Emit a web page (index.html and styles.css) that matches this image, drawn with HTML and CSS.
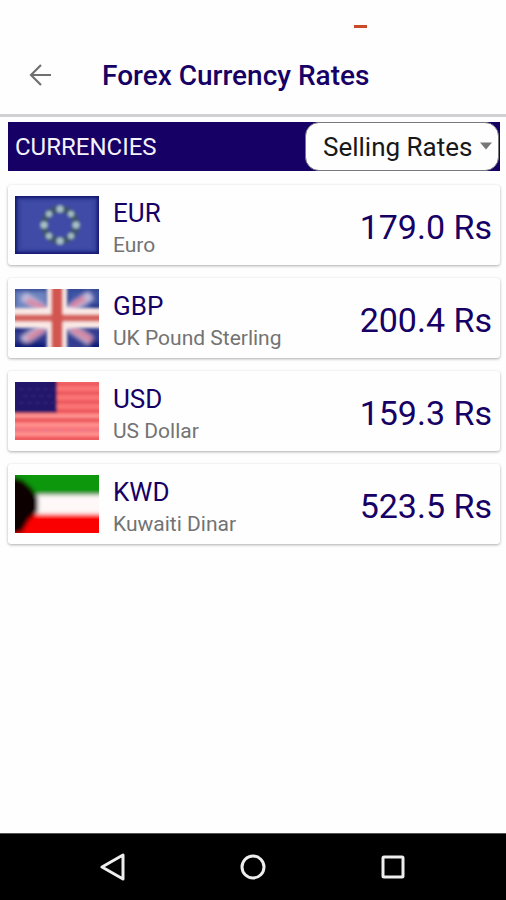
FILE: index.html
```html
<!DOCTYPE html>
<html lang="en">
<head>
<meta charset="utf-8">
<meta name="viewport" content="width=device-width, initial-scale=1">
<title>Forex Currency Rates</title>
<link rel="stylesheet" href="styles.css">
</head>
<body>
<div class="screen">
  <div class="status"><span class="status-mark"></span></div>
  <header class="app-bar">
    <button class="back" type="button" aria-label="Back">
      <svg width="24" height="24" viewBox="0 0 24 24" fill="none" stroke="#707070" stroke-width="2.200"><path d="M23 12H3M13 2L3 12l10 10"/></svg>
    </button>
    <h1 class="title">Forex Currency Rates</h1>
  </header>
  <main class="content">
    <div class="toolbar">
      <h2 class="toolbar-title">CURRENCIES</h2>
      <div class="picker">
        <select class="picker-select" aria-label="Rate type">
          <option>Selling Rates</option>
        </select>
        <svg class="picker-arrow" width="14" height="8" viewBox="0 0 14 8"><path d="M1 0.500h12L7 7.500z" fill="#777"/></svg>
      </div>
    </div>
    <ul class="rates">
      <li class="card">
        <svg class="flag" viewBox="0 0 84 58">
          <defs>
            <filter id="soft" x="-10%" y="-10%" width="120%" height="120%"><feGaussianBlur stdDeviation="1.500"/></filter>
            <filter id="softer" x="-10%" y="-10%" width="120%" height="120%"><feGaussianBlur stdDeviation="2"/></filter>
          </defs>
          <rect width="84" height="58" fill="#11166f"/>
          <g filter="url(#soft)">
            <rect x="2" y="2" width="80" height="54" fill="#3944a0"/>
            <rect x="7" y="6" width="70" height="46" fill="#414ba8"/>
            <circle cx="45" cy="29" r="16" fill="none" stroke="#3c526d" stroke-width="7"/>
            <g fill="#a9c3c9"><circle cx="45" cy="13" r="3.500"/><circle cx="56" cy="18" r="3"/><circle cx="61" cy="29" r="3.500"/><circle cx="56" cy="40" r="3"/><circle cx="45" cy="45" r="3.500"/><circle cx="34" cy="40" r="3"/><circle cx="29" cy="29" r="3.500"/><circle cx="34" cy="18" r="3"/></g>
          </g>
        </svg>
        <div class="names"><span class="code">EUR</span><span class="name">Euro</span></div>
        <span class="rate">179.0 Rs</span>
      </li>
      <li class="card">
        <svg class="flag" viewBox="0 0 84 58">
          <rect width="84" height="58" fill="#344793"/>
          <g filter="url(#softer)">
            <path d="M0 2h32v19H0z" fill="#6d85c0"/><path d="M54 2h30v19H54z" fill="#3d55a6"/>
            <path d="M0 38h32v20H0zM54 38h30v20H54z" fill="#303b91"/>
            <path d="M8 7l68 45M76 6L8 52" stroke="#c3bfe0" stroke-width="9"/>
            <path d="M12 11l18 9M70 9L56 18M12 50l17-11M56 39l20 12" stroke="#dc7f98" stroke-width="5"/>
            <path d="M75 16h12v7H75zM-3 35h9v7h-9zM74 53h14v9H74zM-3 53h34v9H-3z" fill="#101a78"/>
          </g>
          <g filter="url(#soft)">
            <path d="M42-4v66M-4 29h92" stroke="#fae9e6" stroke-width="20"/>
            <path d="M-4 29h92" stroke="#d5625e" stroke-width="7"/>
            <path d="M42-4v66" stroke="#d2554f" stroke-width="11"/>
          </g>
        </svg>
        <div class="names"><span class="code">GBP</span><span class="name">UK Pound Sterling</span></div>
        <span class="rate">200.4 Rs</span>
      </li>
      <li class="card">
        <svg class="flag" viewBox="0 0 84 58">
          <rect width="84" height="58" fill="#f56a6c"/>
          <g filter="url(#soft)">
            <path d="M-4-4h92v66H-4z" fill="#fb7474"/>
            <path d="M-4 2h92M-4 11h92M-4 20h92M-4 29h92M-4 38h92M-4 57h92" stroke="#e84e56" stroke-width="3"/>
            <path d="M-4 34h92M-4 43h92M-4 52h92" stroke="#ff9894" stroke-width="3"/>
            <path d="M0 48h84" stroke="#ef788b" stroke-width="3" stroke-dasharray="9 4"/>
            <path d="M-4-4h46v35H-4z" fill="#20186b"/>
            <path d="M5 7h34M9 14h30M5 21h34" stroke="#342779" stroke-width="2" stroke-dasharray="3 5"/>
          </g>
        </svg>
        <div class="names"><span class="code">USD</span><span class="name">US Dollar</span></div>
        <span class="rate">159.3 Rs</span>
      </li>
      <li class="card">
        <svg class="flag" viewBox="0 0 84 58">
          <path d="M0 0h84v20H0z" fill="#07970b"/><path d="M0 38h84v20H0z" fill="#fb0500"/>
          <g filter="url(#softer)">
            <path d="M-8-8h100v28H-8z" fill="#07970b"/>
            <path d="M-8 20h100v19H-8z" fill="#fff8f8"/>
            <path d="M-8 39h100v28H-8z" fill="#fb0500"/>
            <path d="M-8 0L8 5l9 8 6 10v13l-9 9-7 12-15 3z" fill="#080305"/>
          </g>
        </svg>
        <div class="names"><span class="code">KWD</span><span class="name">Kuwaiti Dinar</span></div>
        <span class="rate">523.5 Rs</span>
      </li>
    </ul>
  </main>
  <nav class="nav-bar" aria-label="System">
    <button class="nav-button" type="button" aria-label="Back"><svg width="28" height="28" viewBox="0 0 28 28"><path d="M3 14L24 2v24z"/></svg></button>
    <button class="nav-button" type="button" aria-label="Home"><svg width="28" height="28" viewBox="0 0 28 28"><circle cx="14" cy="14" r="11"/></svg></button>
    <button class="nav-button" type="button" aria-label="Recent apps"><svg width="28" height="28" viewBox="0 0 28 28"><rect x="4" y="4" width="20" height="20" rx="1"/></svg></button>
  </nav>
</div>
</body>
</html>
```
FILE: styles.css
```css
* {
  box-sizing: border-box;
}

body {
  margin: 0;
  background: #fefefe;
  color: #160066;
  font-family: Roboto, "Liberation Sans", sans-serif;
}

button {
  padding: 0;
  border: 0;
  background: none;
}

.screen {
  display: flex;
  flex-direction: column;
  min-height: 100vh;
}

.status {
  display: flex;
  justify-content: flex-end;
  height: 36px;
  padding: 25px 139px 0 0;
}

.status-mark {
  width: 13px;
  height: 3px;
  background: #cb4a29;
}

.app-bar {
  display: flex;
  align-items: center;
  gap: 50px;
  height: 81px;
  padding: 0 28px;
  border-bottom: 3px solid #d0d0d2;
}

.back {
  display: flex;
}

.title {
  margin: 0;
  padding-top: 2px;
  font-size: 28px;
  font-weight: 500;
  line-height: 32px;
}

.content {
  flex: 1;
  padding: 5px 6px 0 8px;
}

.toolbar {
  display: flex;
  align-items: center;
  justify-content: space-between;
  height: 49px;
  padding: 0 1px 0 7px;
  background: #160066;
}

.toolbar-title {
  margin: 0;
  color: #f4f2fa;
  font-size: 24px;
  font-weight: 400;
}

.picker {
  position: relative;
  height: 100%;
}

.picker-select {
  height: 100%;
  width: 194px;
  padding: 0 24px 0 17px;
  border: 1px solid #77777f;
  border-radius: 14px;
  background: #fefefe;
  color: #181818;
  font-family: inherit;
  font-size: 26px;
  appearance: none;
}

.picker-arrow {
  position: absolute;
  top: 20px;
  right: 6px;
  pointer-events: none;
}

.rates {
  display: flex;
  flex-direction: column;
  gap: 13px;
  margin: 14px 0 0;
  padding: 0;
  list-style: none;
}

.card {
  display: flex;
  align-items: center;
  gap: 14px;
  height: 80px;
  padding: 0 8px 0 7px;
  border-radius: 3px;
  background: #fefefe;
  box-shadow: 0 1px 3px rgba(0, 0, 0, 0.32);
}

.flag {
  flex: none;
  width: 84px;
  height: 58px;
}

.names {
  display: flex;
  flex: 1;
  flex-direction: column;
  padding-top: 5px;
}

.code {
  font-size: 26px;
  line-height: 34px;
}

.name {
  color: #737373;
  font-size: 21px;
  line-height: 30px;
}

.rate {
  padding-top: 4px;
  font-size: 34px;
  white-space: nowrap;
}

.nav-bar {
  display: flex;
  justify-content: center;
  gap: 112px;
  height: 67px;
  border-top: 1px solid #555;
  background: #000;
}

.nav-button {
  display: flex;
  align-items: center;
}

.nav-button svg {
  fill: none;
  stroke: #eee;
  stroke-width: 3;
  stroke-linejoin: round;
}
```
